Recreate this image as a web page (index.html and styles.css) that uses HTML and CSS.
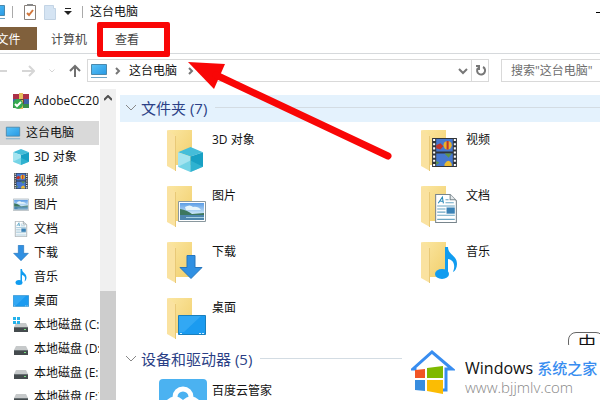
FILE: index.html
```html
<!DOCTYPE html>
<html lang="zh-CN">
  <head>
    <meta charset="UTF-8" />
    <meta name="viewport" content="width=device-width, initial-scale=1.0" />
    <title>这台电脑</title>
    <link rel="stylesheet" href="styles.css">
  </head>
  <body>
    <svg class="sprite" aria-hidden="true">
      <defs>
        <linearGradient id="gold" x1="0" y1="0" x2="1" y2="1">
          <stop offset="0" stop-color="#fbe6a2" /><stop offset="1" stop-color="#f1cf6c" />
        </linearGradient>
        <linearGradient id="blue" x1="0" y1="0" x2="1" y2="1">
          <stop offset="0" stop-color="#59c3f7" /><stop offset="1" stop-color="#2799e5" />
        </linearGradient>
        <linearGradient id="sky" x1="0" y1="0" x2="0" y2="1">
          <stop offset="0" stop-color="#5b9ce5" /><stop offset="1" stop-color="#d8effa" />
        </linearGradient>
      </defs>
      <symbol id="folder" viewBox="0 0 26 42">
        <path fill="url(#gold)" d="M1 0h24v35H9z" />
        <path fill="#fae2a0" d="M0 0l9 6v35l-9-5z" />
        <path fill="#e9c977" d="M8 6h1v35H8z" />
      </symbol>
      <symbol id="pc" viewBox="0 0 18 16">
        <path fill="url(#blue)" stroke="#4a89ad" d="M1.500 1.500h15v10h-15z" />
        <path stroke="#70a6c6" d="M1 14.500h16" />
      </symbol>
      <symbol id="cube" viewBox="0 0 24 24">
        <path fill="#45bdd9" d="M0 5l12-5 12 5-12 4z" />
        <path fill="#a4e4f0" d="M0 5l12 4v15L0 19z" />
        <path fill="#18a0c4" d="M12 9l12-4v14l-12 5z" />
        <path fill="#45c3dc" d="M12 24l12-5-12-6L0 19z" opacity=".5" />
      </symbol>
      <symbol id="film" viewBox="0 0 24 28">
        <path fill="#30343a" d="M0 0h24v28H0z" />
        <path fill="#4678d0" d="M4 1h16v12H4zM4 15h16v12H4z" />
        <path stroke="#fff" stroke-width="2" stroke-dasharray="2 2" d="M2 1v26M22 1v26" />
        <circle cx="15" cy="7" r="4" fill="#e9b22d" />
        <path fill="#c2342c" d="M14 3h2v8h-2zM4 7l4-2 3 3-3 3-4-1z" />
        <path fill="#5f9549" d="M12 15h7l-3 4zM4 22l3 2-3 2z" />
        <path fill="#eabb33" d="M12 25q4-6 7 0v2h-7z" />
      </symbol>
      <symbol id="photo" viewBox="0 0 28 22">
        <path fill="#fff" stroke="#8a989e" d="M.5.500h27v20H.5z" />
        <path fill="url(#sky)" d="M2 2h24v12H2z" />
        <path fill="#e8f5fa" d="M7 6q5-3 8 0 5-1 8 3H8z" />
        <path fill="#3d775e" d="M2 8q7 1 12 5l12-1v2H2z" />
        <path fill="#4d86ad" d="M2 14h24v5H2z" />
        <path fill="#a5d0e2" d="M8 16h18v1H8z" />
      </symbol>
      <symbol id="doc" viewBox="0 0 21 28">
        <path fill="#fff" stroke="#78858c" d="M.5.500h14l6 6v21H.5z" />
        <path fill="#e4e9ec" stroke="#78858c" d="M14.500.500v5h5" />
        <path fill="none" stroke="#2587b6" d="M3 9l4-6 1 6M5 7h3" />
        <path stroke="#6ba6c3" d="M10 5.500h3M10 8.500h8M2 11.500h17M2 14.500h8M2 17.500h8M2 20.500h17M2 24.500h17" />
        <path fill="#3a82b6" d="M11 13h8v6h-8z" />
      </symbol>
      <symbol id="down" viewBox="0 0 24 24">
        <path fill="#3090e2" stroke="#2676bd" d="M8 .500h8v12h7L12 23.500 1 12.500h7z" />
      </symbol>
      <symbol id="note" viewBox="0 0 22 32">
        <ellipse cx="7" cy="27" rx="7" ry="5" fill="#109cf0" />
        <path fill="#109cf0" d="M10 0h3c0 8 9 8 9 17 0 4-2 7-4 8 3-8 0-12-5-13v15h-3z" />
      </symbol>
      <symbol id="desk" viewBox="0 0 28 20">
        <path fill="#1b9bf0" stroke="#197fbd" d="M.5.500h27v19H.5z" />
        <path fill="#43b1f7" d="M1 1h22L6 17H1z" opacity=".6" />
        <path stroke="#d3efff" stroke-dasharray="2 1" d="M2 18.500h3M21 18.500h5" />
      </symbol>
      <symbol id="drive" viewBox="0 0 16 14">
        <path fill="#c6c9ca" d="M3 4h10l2 4H1z" />
        <path fill="#454b4e" d="M1 8h14v5H1z" />
        <path fill="#697174" d="M1 8h14v1H1z" />
        <path fill="#77df81" d="M11 10h2v1h-2z" />
      </symbol>
      <symbol id="rar" viewBox="0 0 16 16">
        <path fill="#ad3048" d="M0 1h16v5H0z" />
        <path fill="#3f63a8" d="M0 6h16v5H0z" />
        <path fill="#398c4a" d="M0 11h16v4H0z" />
        <path fill="#e6bd5d" d="M6 0h4v16H6z" />
        <path fill="none" stroke="#6a4034" d="M5.500 6.500h5v4h-5z" />
        <circle cx="5" cy="11" r="5" fill="#35a950" />
        <path fill="none" stroke="#fff" stroke-width="2" d="M2 11l2 2 4-4" />
      </symbol>
      <symbol id="chevron" viewBox="0 0 12 8">
        <path fill="none" stroke="currentColor" d="M1 1l5 5 5-5" />
      </symbol>
      <symbol id="crumb" viewBox="0 0 6 8">
        <path fill="none" stroke="#777" stroke-width="2" d="M1 1l3 3-3 3" />
      </symbol>
    </svg>

    <div class="window">
      <header class="titlebar">
        <svg class="title-pc"><use href="#pc" /></svg>
        <span class="divider"></span>
        <button class="tool" aria-label="属性">
          <svg width="12" height="16" viewBox="0 0 12 16"><path fill="#fff" stroke="#88817b" d="M.5 1.500h11v14H.5z" /><path fill="#888" d="M3 0h6v2H3z" /><path fill="none" stroke="#d1773c" stroke-width="2" d="M3 9l2 2 4-5" /></svg>
        </button>
        <button class="tool" aria-label="新建文件夹">
          <svg width="12" height="16" viewBox="0 0 12 16"><path fill="#d5e4f3" stroke="#c3d4e5" d="M.5 1.500h9v3h2v11H.5z" /></svg>
        </button>
        <button class="tool" aria-label="自定义快速访问工具栏">
          <svg width="8" height="8" viewBox="0 0 8 8"><path fill="#222" d="M1 0h6v1H1zM0 3h8L4 7z" /></svg>
        </button>
        <span class="divider"></span>
        <h1>这台电脑</h1>
        <button class="minimize" aria-label="最小化"></button>
      </header>

      <nav class="ribbon">
        <button class="tab file">文件</button>
        <button class="tab">计算机</button>
        <button class="tab view">查看<span class="highlight"></span></button>
      </nav>

      <div class="toolbar">
        <div class="history">
          <button aria-label="后退"><svg width="14" height="12" viewBox="0 0 14 12"><path fill="none" stroke="#d6d6d6" stroke-width="2" d="M14 6H1M6 1L1 6l5 5" /></svg></button>
          <button aria-label="前进"><svg width="14" height="12" viewBox="0 0 14 12"><path fill="none" stroke="#d6d6d6" stroke-width="2" d="M1 6h12M8 1l5 5-5 5" /></svg></button>
          <button aria-label="最近"><svg class="recent" width="6" height="4"><use href="#chevron" /></svg></button>
          <button aria-label="向上"><svg width="12" height="13" viewBox="0 0 12 13"><path fill="none" stroke="#707070" stroke-width="2" d="M6 13V2M1 7l5-5 5 5" /></svg></button>
        </div>
        <div class="address">
          <svg width="18" height="16"><use href="#pc" /></svg>
          <svg width="6" height="8"><use href="#crumb" /></svg>
          <a href="#">这台电脑</a>
          <svg width="6" height="8"><use href="#crumb" /></svg>
          <button class="drop" aria-label="历史记录"><svg width="10" height="8" viewBox="0 0 10 8"><path fill="none" stroke="#777" stroke-width="2" d="M1 2l4 4 4-4" /></svg></button>
          <button class="refresh" aria-label="刷新"><svg width="12" height="12" viewBox="0 0 12 12"><path fill="none" stroke="#777" stroke-width="2" d="M8 2a4 4 0 1 1-5 1M1 1h3v4" /></svg></button>
        </div>
        <input class="search" type="text" aria-label="搜索" placeholder='搜索"这台电脑"'>
      </div>

      <div class="main">
        <nav class="sidebar">
          <a class="top" href="#"><svg><use href="#rar" /></svg>AdobeCC2018</a>
          <a class="current" href="#"><svg><use href="#pc" /></svg>这台电脑</a>
          <a href="#"><svg><use href="#cube" /></svg>3D 对象</a>
          <a href="#"><svg><use href="#film" /></svg>视频</a>
          <a href="#"><svg><use href="#photo" /></svg>图片</a>
          <a href="#"><svg><use href="#doc" /></svg>文档</a>
          <a href="#"><svg><use href="#down" /></svg>下载</a>
          <a href="#"><svg><use href="#note" /></svg>音乐</a>
          <a href="#"><svg><use href="#desk" /></svg>桌面</a>
          <a href="#"><svg viewBox="0 0 16 16"><use href="#drive" y="2" width="16" height="14" /><path fill="#25b2eb" d="M0 0h3v3H0zM4 0h3v3H4zM0 4h3v3H0zM4 4h3v3H4z" /></svg>本地磁盘 (C:)</a>
          <a href="#"><svg><use href="#drive" /></svg>本地磁盘 (D:)</a>
          <a href="#"><svg><use href="#drive" /></svg>本地磁盘 (E:)</a>
          <a href="#"><svg><use href="#drive" /></svg>本地磁盘 (F:)</a>
        </nav>
        <div class="scrollbar">
          <button aria-label="向上滚动"><svg width="8" height="6" viewBox="0 0 8 6"><path fill="none" stroke="#505050" stroke-width="2" d="M0 5l4-4 4 4" /></svg></button>
          <div class="thumb"></div>
        </div>

        <main class="content">
          <h2 class="group active"><svg width="12" height="8"><use href="#chevron" /></svg>文件夹 (7)</h2>
          <div class="items">
            <a class="item" href="#"><span class="icon"><svg class="folder"><use href="#folder" /></svg><svg class="badge cube"><use href="#cube" /></svg></span>3D 对象</a>
            <a class="item" href="#"><span class="icon"><svg class="folder"><use href="#folder" /></svg><svg class="badge film"><use href="#film" /></svg></span>视频</a>
            <a class="item" href="#"><span class="icon"><svg class="folder"><use href="#folder" /></svg><svg class="badge photo"><use href="#photo" /></svg></span>图片</a>
            <a class="item" href="#"><span class="icon"><svg class="folder"><use href="#folder" /></svg><svg class="badge doc"><use href="#doc" /></svg></span>文档</a>
            <a class="item" href="#"><span class="icon"><svg class="folder"><use href="#folder" /></svg><svg class="badge down"><use href="#down" /></svg></span>下载</a>
            <a class="item" href="#"><span class="icon"><svg class="folder"><use href="#folder" /></svg><svg class="badge note"><use href="#note" /></svg></span>音乐</a>
            <a class="item" href="#"><span class="icon"><svg class="folder"><use href="#folder" /></svg><svg class="badge desk"><use href="#desk" /></svg></span>桌面</a>
          </div>
          <h2 class="group"><svg width="12" height="8"><use href="#chevron" /></svg>设备和驱动器 (5)</h2>
          <div class="items devices">
            <a class="item" href="#">
              <svg class="cloud" viewBox="0 0 48 48"><rect width="48" height="48" rx="4" fill="#4bb2f1" /><g fill="none" stroke="#fff" stroke-width="5"><circle cx="24" cy="18" r="8" /><circle cx="16" cy="28" r="8" /><circle cx="32" cy="28" r="8" /></g></svg>
              百度云管家
            </a>
          </div>
        </main>
      </div>

      <svg class="arrow" viewBox="0 0 206 100" aria-hidden="true"><path fill="#f90606" d="M0 0l37 2-11 25z" /><path stroke="#f90606" stroke-width="7" stroke-linecap="round" d="M28 13l172 81" /></svg>
      <div class="ime">中</div>
      <div class="brand">
        <svg width="44" height="44" viewBox="0 0 44 44"><path fill="none" stroke="#388df0" stroke-width="3" d="M4 20v-1H2L21 2l20 17h-6v21h-4" /><path fill="#f15425" d="M4 20l10-1v9H4z" /><path fill="#7eb900" d="M16 18l16-2v12H16z" /><path fill="#388ddf" d="M4 30h10v11L4 40z" /><path fill="#fbbc04" d="M16 30h16v14l-16-3z" /></svg>
        <div>
          <div class="brand-name">Windows <span>系统之家</span></div>
          <div class="brand-url">www.bjjmlv.com</div>
        </div>
      </div>
    </div>
  </body>
</html>
```
FILE: styles.css
```css
* {
  box-sizing: border-box;
}
body {
  margin: 0;
  font: 12px/16px "Open Sans", "Noto Sans CJK SC", sans-serif;
  color: #111;
  background: #fff;
}
button {
  padding: 0;
  border: 0;
  font: inherit;
  color: inherit;
  background: none;
}
a {
  color: inherit;
  text-decoration: none;
}
svg {
  display: block;
  flex: none;
}
h1, h2 {
  margin: 0;
  font-size: 12px;
  font-weight: normal;
}
.sprite {
  position: absolute;
  width: 0;
  height: 0;
}
.window {
  position: relative;
  display: flex;
  flex-direction: column;
  height: 100vh;
  overflow: hidden;
}

/* title bar */
.titlebar {
  display: flex;
  flex: none;
  align-items: center;
  height: 27px;
  padding-bottom: 3px;
}
.title-pc {
  width: 18px;
  height: 16px;
  margin-left: -12px;
}
.divider {
  width: 1px;
  height: 12px;
  margin: 0 7px 0 6px;
  background: #aaa;
}
.tool {
  margin: 0 4px;
}
.minimize {
  width: 10px;
  height: 1px;
  margin: 0 -6px 0 auto;
  background: #000;
}

/* ribbon */
.ribbon {
  display: flex;
  flex: none;
  height: 27px;
  padding-bottom: 3px;
  border-bottom: 1px solid #d6d9dc;
}
.tab {
  padding: 2px 14px 0;
  color: #444;
}
.file {
  width: 37px;
  padding: 2px 0 0;
  text-indent: -20px;
  color: #fff;
  background: #80603c;
}
.view {
  position: relative;
}
.highlight {
  position: absolute;
  inset: -5px -17px -7px -4px;
  border: 6px solid #f90606;
  border-radius: 2px;
}

/* address bar */
.toolbar {
  display: flex;
  flex: none;
  height: 35px;
  padding: 5px 0 7px;
}
.history {
  display: flex;
  align-items: center;
  justify-content: space-between;
  width: 88px;
  margin-left: -7px;
}
.recent {
  color: #aaa;
}
.address {
  display: flex;
  flex: 1;
  align-items: center;
  gap: 7px;
  margin-left: 6px;
  padding-left: 2px;
  border: 1px solid #d9d9d9;
}
.address a {
  margin: 0 4px 0 1px;
}
.drop {
  margin-left: auto;
}
.refresh {
  align-self: stretch;
  width: 17px;
  padding-left: 3px;
  margin-left: -4px;
  border-left: 1px solid #d9d9d9;
}
.search {
  width: 100px;
  margin: 0 -1px 0 12px;
  padding: 0 0 0 9px;
  border: 1px solid #d9d9d9;
  border-radius: 0;
  font: inherit;
  background: #fff;
}
.search::placeholder {
  color: #6d6d6d;
}

/* navigation pane */
.main {
  display: flex;
  flex: 1;
  min-height: 0;
}
.sidebar {
  flex: none;
  width: 99px;
  overflow: hidden;
}
.sidebar a {
  display: flex;
  align-items: center;
  gap: 5px;
  height: 24px;
  padding-left: 13px;
  white-space: nowrap;
}
.sidebar svg {
  width: 16px;
  height: 16px;
}
.sidebar .top {
  margin-bottom: 8px;
}
.sidebar .current {
  padding-left: 5px;
  background: #d9d9d9;
}
.scrollbar {
  display: flex;
  flex: none;
  flex-direction: column;
  justify-content: space-between;
  width: 17px;
  border-left: 1px solid #fff;
  background: #f0f0f0;
}
.scrollbar button {
  display: flex;
  justify-content: center;
  padding-top: 6px;
}
.thumb {
  height: 35%;
  background: #cdcdcd;
}

/* file list */
.content {
  flex: 1;
  min-width: 0;
  padding: 6px 0 0 4px;
}
.group {
  display: flex;
  align-items: center;
  gap: 4px;
  height: 27px;
  padding: 0 0 2px 5px;
  font-size: 15px;
  line-height: 20px;
  color: #2b3f86;
}
.group svg {
  color: #888;
}
.group::after {
  content: "";
  flex: 1;
  height: 1px;
  margin-left: 4px;
  background: #d3dce3;
}
.active {
  background: #e4f2fd;
}
.items {
  display: grid;
  grid-template-columns: repeat(auto-fill, 254px);
  row-gap: 12px;
  width: 508px;
  padding: 6px 0 6px 47px;
  box-sizing: content-box;
}
.item {
  display: flex;
  gap: 5px;
  height: 44px;
  line-height: 24px;
}
.icon {
  position: relative;
  width: 40px;
  height: 44px;
}
.folder {
  width: 26px;
  height: 42px;
  margin-top: 2px;
}
.badge {
  position: absolute;
  right: 4px;
  bottom: 5px;
}
.cube {
  bottom: 0;
  width: 25px;
  height: 25px;
}
.film {
  width: 25px;
  height: 29px;
}
.photo {
  right: 1px;
  width: 28px;
  height: 22px;
}
.doc {
  width: 22px;
  height: 29px;
}
.down {
  width: 24px;
  height: 24px;
}
.note {
  width: 22px;
  height: 32px;
}
.desk {
  right: 1px;
  width: 28px;
  height: 20px;
}
.devices {
  padding-left: 39px;
}
.cloud {
  width: 48px;
  height: 48px;
}

/* overlays */
.arrow {
  position: absolute;
  left: 188px;
  top: 62px;
  width: 206px;
  height: 100px;
}
.ime {
  position: absolute;
  right: -4px;
  bottom: 48px;
  width: 36px;
  height: 20px;
  padding-left: 9px;
  border: 1px solid #666;
  border-radius: 8px;
  font-size: 18px;
  line-height: 20px;
  background: #fff;
}
.brand {
  position: absolute;
  right: 0;
  bottom: 0;
  display: flex;
  gap: 10px;
  width: 198px;
  height: 55px;
  padding: 5px 0 0 9px;
  background: #fff;
}
.brand-name {
  padding-top: 7px;
  font-size: 16px;
  line-height: 22px;
  font-weight: 500;
  white-space: nowrap;
}
.brand-name span {
  font-size: 15px;
  color: #388df0;
}
.brand-url {
  font-size: 15px;
  line-height: 16px;
  font-weight: 300;
  color: #888;
}
```
